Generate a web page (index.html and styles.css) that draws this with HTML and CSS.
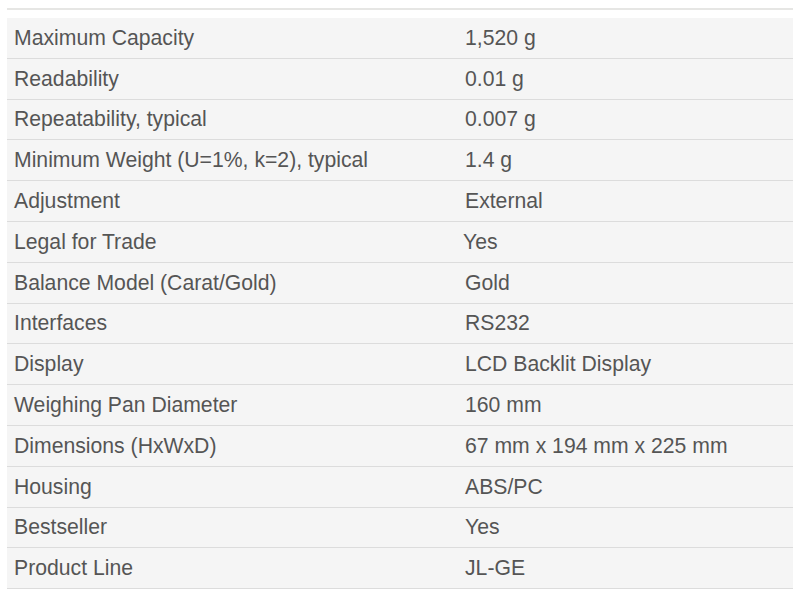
FILE: index.html
```html
<!DOCTYPE html>
<html>
<head>
<meta charset="utf-8">
<link rel="stylesheet" href="styles.css">
</head>
<body>
<div class="wrap">
  <div class="rule"></div>
  <table class="specs">
    <tbody>
      <tr><td class="k">Maximum Capacity</td><td class="v">1,520 g</td></tr>
      <tr><td class="k">Readability</td><td class="v">0.01 g</td></tr>
      <tr><td class="k">Repeatability, typical</td><td class="v">0.007 g</td></tr>
      <tr><td class="k">Minimum Weight (U=1%, k=2), typical</td><td class="v">1.4 g</td></tr>
      <tr><td class="k">Adjustment</td><td class="v">External</td></tr>
      <tr><td class="k">Legal for Trade</td><td class="v"><span class="shift">Yes</span></td></tr>
      <tr><td class="k">Balance Model (Carat/Gold)</td><td class="v">Gold</td></tr>
      <tr><td class="k">Interfaces</td><td class="v">RS232</td></tr>
      <tr><td class="k">Display</td><td class="v">LCD Backlit Display</td></tr>
      <tr><td class="k">Weighing Pan Diameter</td><td class="v">160 mm</td></tr>
      <tr><td class="k">Dimensions (HxWxD)</td><td class="v">67 mm x 194 mm x 225 mm</td></tr>
      <tr><td class="k">Housing</td><td class="v">ABS/PC</td></tr>
      <tr><td class="k">Bestseller</td><td class="v">Yes</td></tr>
      <tr><td class="k">Product Line</td><td class="v">JL-GE</td></tr>
    </tbody>
  </table>
</div>
</body>
</html>
```
FILE: styles.css
```css
html, body {
  margin: 0;
  padding: 0;
  background: #ffffff;
}
.wrap {
  padding: 8px 7px 0 7px;
  font-family: "Liberation Sans", Arial, sans-serif;
  color: #555555;
}
.rule {
  height: 2px;
  background: #e6e6e4;
  margin-bottom: 8px;
}
.specs {
  width: 786px;
  border-collapse: collapse;
  background: #f5f5f5;
  table-layout: fixed;
}
.specs td {
  height: 39.8px;
  padding: 0 7px;
  border-bottom: 1px solid #dcdcdc;
  font-size: 21.2px;
  line-height: 24px;
  vertical-align: middle;
  white-space: nowrap;
}
.specs td.k {
  width: 437px;
}
.specs td.v {
  padding-left: 7px;
}
.shift {
  margin-left: -2px;
}
```
